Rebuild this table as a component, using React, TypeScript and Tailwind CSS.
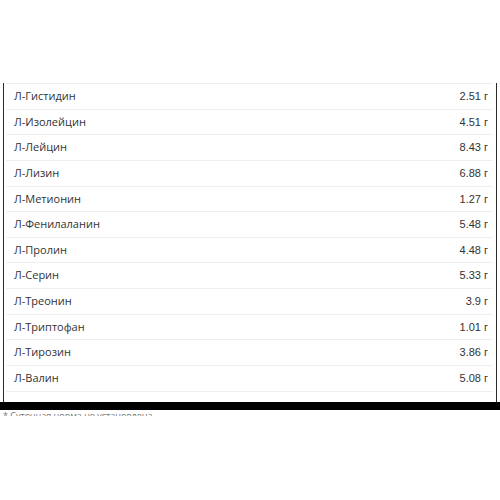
import React from 'react';

interface Row {
  name: string;
  amount: string;
}

const rows: Row[] = [
  { name: 'Л-Гистидин', amount: '2.51 г' },
  { name: 'Л-Изолейцин', amount: '4.51 г' },
  { name: 'Л-Лейцин', amount: '8.43 г' },
  { name: 'Л-Лизин', amount: '6.88 г' },
  { name: 'Л-Метионин', amount: '1.27 г' },
  { name: 'Л-Фенилаланин', amount: '5.48 г' },
  { name: 'Л-Пролин', amount: '4.48 г' },
  { name: 'Л-Серин', amount: '5.33 г' },
  { name: 'Л-Треонин', amount: '3.9 г' },
  { name: 'Л-Триптофан', amount: '1.01 г' },
  { name: 'Л-Тирозин', amount: '3.86 г' },
  { name: 'Л-Валин', amount: '5.08 г' },
];

export default function App() {
  return (
    <div className="w-[500px] h-[500px] bg-white overflow-hidden pt-[83px]">
      {/* table frame */}
      <div className="mx-[3px] border-x border-[#2a2a2a] pl-[2px] pr-[3px] h-[319px]">
        {rows.map((row) => (
          <div
            key={row.name}
            className="flex items-center justify-between h-[25.64px] border-t border-[#efefef] pl-[8px] pr-[5px] text-[11px] text-[#333]"
          >
            <span style={{ fontFamily: '"Open Sans", sans-serif' }}>{row.name}</span>
            <span style={{ fontFamily: '"Liberation Sans", Arial, sans-serif' }}>{row.amount}</span>
          </div>
        ))}
        <div className="border-t border-[#efefef]" />
      </div>
      <div className="h-[8px] bg-black" />
      <div className="h-[6px] overflow-hidden pl-[3px]">
        <p
          className="text-[9px] leading-[13px] text-[#777] -mt-[1px]"
          style={{ fontFamily: '"Open Sans", sans-serif' }}
        >
          * Суточная норма не установлена
        </p>
      </div>
    </div>
  );
}
